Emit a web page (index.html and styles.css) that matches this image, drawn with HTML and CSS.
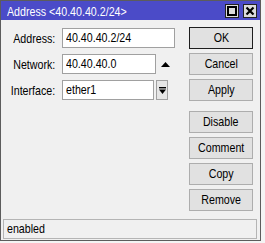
FILE: index.html
```html
<!DOCTYPE html>
<html>
<head>
<meta charset="utf-8">
<link rel="stylesheet" href="styles.css">
</head>
<body>
<div class="window">
  <div class="titlebar">
    <span class="title"><span class="t">Address &lt;40.40.40.2/24&gt;</span></span>
    <div class="tbtns">
      <span class="tbtn"><svg width="10" height="10" viewBox="0 0 10 10"><rect x="1" y="1" width="8" height="8" fill="none" stroke="#000" stroke-width="2"/></svg></span>
      <span class="tbtn"><svg width="10" height="10" viewBox="0 0 10 10"><path d="M1.5 1.5 L8.5 8.5 M8.5 1.5 L1.5 8.5" stroke="#000" stroke-width="2.2"/></svg></span>
    </div>
  </div>
  <div class="body">
    <div class="form">
      <div class="row">
        <span class="label"><span class="t">Address:</span></span>
        <div class="field f-addr"><span class="t">40.40.40.2/24</span></div>
      </div>
      <div class="row">
        <span class="label"><span class="t">Network:</span></span>
        <div class="field f-net"><span class="t">40.40.40.0</span></div>
        <span class="updown"><svg width="9" height="5" viewBox="0 0 9 5"><path d="M0 5 L4.5 0 L9 5 Z" fill="#000"/></svg></span>
      </div>
      <div class="row">
        <span class="label"><span class="t">Interface:</span></span>
        <div class="field f-if"><span class="t">ether1</span></div>
        <span class="dropbtn"><svg width="7" height="7" viewBox="0 0 7 7"><rect x="0" y="0" width="7" height="1.4" fill="#000"/><path d="M0 2.5 L7 2.5 L3.5 7 Z" fill="#000"/></svg></span>
      </div>
    </div>
    <div class="buttons">
      <div class="group">
        <div class="btn default"><span class="t">OK</span></div>
        <div class="btn"><span class="t">Cancel</span></div>
        <div class="btn"><span class="t">Apply</span></div>
      </div>
      <div class="group">
        <div class="btn"><span class="t">Disable</span></div>
        <div class="btn"><span class="t">Comment</span></div>
        <div class="btn"><span class="t">Copy</span></div>
        <div class="btn"><span class="t">Remove</span></div>
      </div>
    </div>
  </div>
  <div class="status">
    <div class="status-box"><span class="t">enabled</span></div>
  </div>
</div>
</body>
</html>
```
FILE: styles.css
```css
html, body {
  margin: 0;
  padding: 0;
}
body {
  width: 265px;
  height: 243px;
  background: #f4f4f4;
  font-family: "Liberation Sans", Arial, sans-serif;
  font-size: 13px;
  color: #000;
  overflow: hidden;
}
.t {
  display: inline-block;
  transform: scaleX(0.82);
  transform-origin: left center;
  white-space: nowrap;
}
.window {
  width: 259px;
  height: 239px;
  border: 1px solid #5c5c5c;
  background: #f0f0f0;
  display: flex;
  flex-direction: column;
}
.titlebar {
  height: 19px;
  background: #4b4bc8;
  display: flex;
  align-items: flex-start;
  justify-content: space-between;
}
.title {
  color: #fff;
  line-height: 19px;
  padding-left: 6px;
  padding-top: 1px;
  white-space: nowrap;
}
.tbtns {
  display: flex;
  gap: 4px;
  padding-top: 3px;
  padding-right: 3px;
}
.tbtn {
  width: 12px;
  height: 12px;
  border: 1px solid #222;
  background: #dcdcdc;
  display: flex;
  align-items: center;
  justify-content: center;
}
.tbtn svg { display: block; }
.body {
  flex: 1;
  display: flex;
  justify-content: space-between;
}
.form {
  padding-top: 8px;
  display: flex;
  flex-direction: column;
  gap: 6px;
}
.row {
  display: flex;
  align-items: center;
  height: 20px;
}
.label {
  width: 54px;
  text-align: right;
  margin-right: 7px;
  white-space: nowrap;
}
.label .t {
  transform-origin: right center;
}
.field {
  box-sizing: border-box;
  height: 20px;
  border: 1px solid #a0a0a0;
  background: #fff;
  padding-left: 3px;
  line-height: 18px;
  white-space: nowrap;
  overflow: hidden;
}
.f-addr { width: 113px; }
.f-net { width: 94px; }
.f-if { width: 92px; }
.updown {
  width: 12px;
  margin-left: 3px;
  display: flex;
  justify-content: center;
}
.updown svg, .dropbtn svg { display: block; }
.dropbtn {
  box-sizing: border-box;
  width: 12px;
  height: 20px;
  margin-left: 2px;
  border: 1px solid #a0a0a0;
  background: #e6e6e6;
  display: flex;
  align-items: center;
  justify-content: center;
}
.buttons {
  padding-top: 7px;
  padding-right: 7px;
  display: flex;
  flex-direction: column;
  gap: 10px;
}
.group {
  display: flex;
  flex-direction: column;
  gap: 4px;
}
.btn {
  box-sizing: border-box;
  width: 64px;
  height: 22px;
  border: 1px solid #adadad;
  background: #e1e1e1;
  text-align: center;
  line-height: 20px;
}
.btn .t {
  transform-origin: center center;
}
.btn.default {
  border-color: #1e1e1e;
}
.status {
  padding: 0 3px 1px 2px;
}
.status-box {
  box-sizing: border-box;
  height: 20px;
  border: 1px solid #b4b4b4;
  padding-left: 3px;
  line-height: 18px;
}
```
